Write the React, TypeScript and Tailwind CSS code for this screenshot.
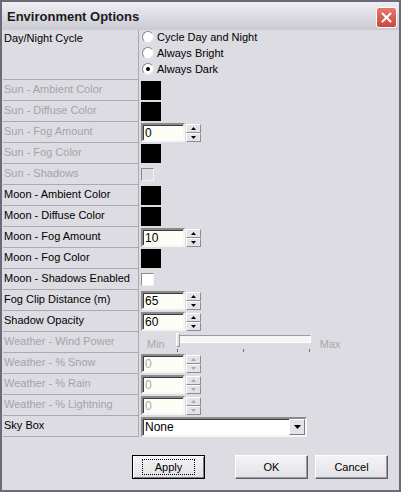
type Row = {
  label: string;
  disabled?: boolean;
  kind: "color" | "spin" | "check" | "slider" | "select" | "radio";
  value?: string;
  valueDisabled?: boolean;
};

const rows: Row[] = [
  { label: "Sun - Ambient Color", disabled: true, kind: "color" },
  { label: "Sun - Diffuse Color", disabled: true, kind: "color" },
  { label: "Sun - Fog Amount", disabled: true, kind: "spin", value: "0" },
  { label: "Sun - Fog Color", disabled: true, kind: "color" },
  { label: "Sun - Shadows", disabled: true, kind: "check", valueDisabled: true },
  { label: "Moon - Ambient Color", kind: "color" },
  { label: "Moon - Diffuse Color", kind: "color" },
  { label: "Moon - Fog Amount", kind: "spin", value: "10" },
  { label: "Moon - Fog Color", kind: "color" },
  { label: "Moon - Shadows Enabled", kind: "check" },
  { label: "Fog Clip Distance (m)", kind: "spin", value: "65" },
  { label: "Shadow Opacity", kind: "spin", value: "60" },
  { label: "Weather - Wind Power", disabled: true, kind: "slider", valueDisabled: true },
  { label: "Weather - % Snow", disabled: true, kind: "spin", value: "0", valueDisabled: true },
  { label: "Weather - % Rain", disabled: true, kind: "spin", value: "0", valueDisabled: true },
  { label: "Weather - % Lightning", disabled: true, kind: "spin", value: "0", valueDisabled: true },
  { label: "Sky Box", kind: "select" },
];

function Radio({ label, checked }: { label: string; checked?: boolean }) {
  return (
    <div className="flex items-center h-[16px]">
      <div className="w-[12px] h-[12px] rounded-full bg-white border border-t-[#8a8a8a] border-l-[#8a8a8a] border-r-[#e8e8e8] border-b-[#e8e8e8] flex items-center justify-center">
        {checked && <div className="w-[4px] h-[4px] rounded-full bg-black" />}
      </div>
      <span className="ml-[3px]">{label}</span>
    </div>
  );
}

function SpinBtn({ up, disabled }: { up?: boolean; disabled?: boolean }) {
  return (
    <div className="w-[15px] h-[9px] bg-[#e4e4e8] border border-t-white border-l-white border-r-[#8c8c96] border-b-[#8c8c96] flex items-center justify-center">
      <svg width="5" height="3" viewBox="0 0 5 3">
        <path
          d={up ? "M2.5 0 L5 3 L0 3 Z" : "M0 0 L5 0 L2.5 3 Z"}
          fill={disabled ? "#a8a8a8" : "#000"}
        />
      </svg>
    </div>
  );
}

function Spin({ value, disabled }: { value: string; disabled?: boolean }) {
  return (
    <div className="flex items-center">
      <div
        className={`w-[44px] h-[19px] bg-[#fdfdf6] border-2 border-t-[#8a8a8a] border-l-[#8a8a8a] border-r-[#f6f6f6] border-b-[#f6f6f6] shadow-[inset_1px_1px_0_#3c3c3c] pl-[2px] text-[12px] leading-[16px] ${
          disabled ? "text-[#a8a8a8]" : "text-black"
        }`}
      >
        {value}
      </div>
      <div className="flex flex-col ml-[1px]">
        <SpinBtn up disabled={disabled} />
        <SpinBtn disabled={disabled} />
      </div>
    </div>
  );
}

function Value({ row }: { row: Row }) {
  if (row.kind === "color") return <div className="w-[20px] h-[19px] bg-black" />;
  if (row.kind === "spin") return <Spin value={row.value!} disabled={row.valueDisabled} />;
  if (row.kind === "check")
    return (
      <div
        className={`w-[13px] h-[13px] border border-t-[#8a8a8a] border-l-[#8a8a8a] border-r-[#f4f4f4] border-b-[#f4f4f4] ${
          row.valueDisabled ? "bg-[#dcdce2]" : "bg-white"
        }`}
      />
    );
  if (row.kind === "slider")
    return (
      <div className="flex items-start text-[#a8a8a8] pt-[1px]">
        <span className="ml-[6px] mt-[3px]">Min</span>
        <div className="relative ml-[11px] w-[136px] h-[20px]">
          <div className="absolute left-[1px] top-[2px] w-[134px] h-[8px] bg-[#f6f6f6] border border-t-[#9a9aa2] border-l-[#9a9aa2] border-r-white border-b-white" />
          <div className="absolute left-0 top-0 w-[4px] h-[14px] bg-[#e4e4e8] border border-t-white border-l-white border-r-[#9a9aa2] border-b-[#9a9aa2]" />
          <div className="absolute left-[1px] top-[16px] w-px h-[3px] bg-[#707070]" />
          <div className="absolute left-[67px] top-[16px] w-px h-[3px] bg-[#707070]" />
          <div className="absolute left-[133px] top-[16px] w-px h-[3px] bg-[#707070]" />
        </div>
        <span className="ml-[8px] mt-[3px]">Max</span>
      </div>
    );
  return (
    <div className="w-[166px] h-[20px] bg-white border-2 border-t-[#8a8a8a] border-l-[#8a8a8a] border-r-[#f6f6f6] border-b-[#f6f6f6] shadow-[inset_1px_1px_0_#3c3c3c] flex items-center justify-between">
      <span className="pl-[2px] text-[12px]">None</span>
      <div className="w-[16px] h-[16px] bg-[#e4e4e8] border border-t-white border-l-white border-r-[#7c7c86] border-b-[#7c7c86] flex items-center justify-center">
        <svg width="7" height="4" viewBox="0 0 7 4">
          <path d="M0 0 L7 0 L3.5 4 Z" fill="#000" />
        </svg>
      </div>
    </div>
  );
}

function Button({ label, isDefault }: { label: string; isDefault?: boolean }) {
  return (
    <div
      className={`w-[73px] h-[24px] flex items-center justify-center bg-gradient-to-b from-[#f4f4f6] to-[#e2e2e6] ${
        isDefault
          ? "border border-black shadow-[inset_1px_1px_0_#fff,inset_-1px_-1px_0_#7c7c86]"
          : "border border-t-white border-l-white border-r-[#5c5c66] border-b-[#5c5c66] shadow-[inset_-1px_-1px_0_#9c9ca6]"
      }`}
    >
      {isDefault ? (
        <span className="border border-dotted border-black px-[12px] leading-[14px]">{label}</span>
      ) : (
        <span>{label}</span>
      )}
    </div>
  );
}

export default function App() {
  return (
    <div
      className="w-[401px] h-[492px] bg-[#dcdce2] border-2 border-[#6a6a7a] flex flex-col text-[11px] text-black"
      style={{ fontFamily: '"Liberation Sans", Arial, sans-serif' }}
    >
      <div className="h-[28px] flex items-center justify-between bg-gradient-to-b from-[#eeeef2] via-[#dcdce4] to-[#cacad4] pl-[5px] pr-[2px]">
        <span className="text-[13px] font-bold text-[#1a1a1a] mt-[2px]">Environment Options</span>
        <div className="w-[21px] h-[21px] rounded-[3px] border border-white bg-gradient-to-b from-[#e47a6a] to-[#c8483c] flex items-center justify-center mt-[3px]">
          <svg width="11" height="11" viewBox="0 0 11 11">
            <path d="M1.5 1.5 L9.5 9.5 M9.5 1.5 L1.5 9.5" stroke="#fff" strokeWidth="2" strokeLinecap="round" />
          </svg>
        </div>
      </div>

      <div className="ml-[1px] grid grid-cols-[136px_1fr]">
        <div className="h-[50px] border-b border-r border-[#a9a9b4] pl-[1px]">Day/Night Cycle</div>
        <div className="h-[50px] pl-[3px] -mt-[1px] flex flex-col">
          <Radio label="Cycle Day and Night" />
          <Radio label="Always Bright" />
          <Radio label="Always Dark" checked />
        </div>
        {rows.map((row) => (
          <div key={row.label} className="contents">
            <div
              className={`h-[21px] border-b border-r border-[#a9a9b4] pl-[1px] pt-[1px] ${
                row.disabled ? "text-[#a4a4a8]" : "text-black"
              }`}
            >
              {row.label}
            </div>
            <div className="h-[21px] pl-[2px] flex items-center">
              <Value row={row} />
            </div>
          </div>
        ))}
      </div>

      <div className="flex mt-[18px] ml-[130px]">
        <Button label="Apply" isDefault />
        <div className="ml-[30px]">
          <Button label="OK" />
        </div>
        <div className="ml-[7px]">
          <Button label="Cancel" />
        </div>
      </div>
    </div>
  );
}
